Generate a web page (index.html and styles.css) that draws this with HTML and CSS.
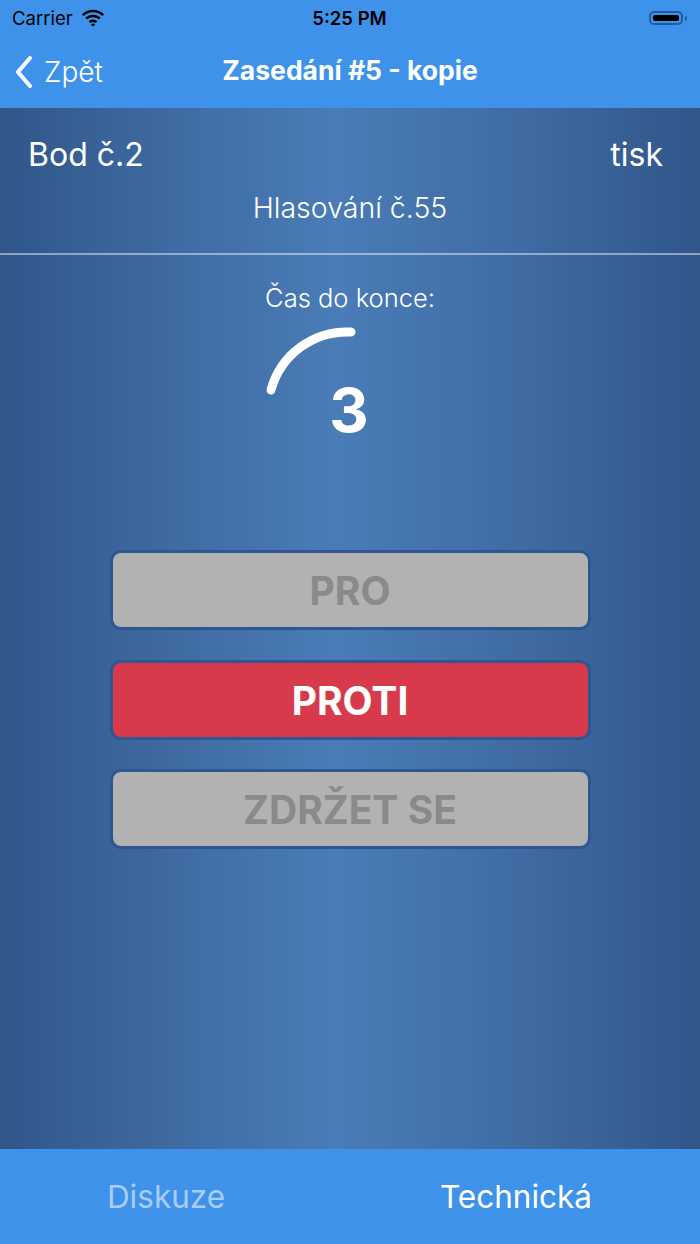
FILE: index.html
```html
<!DOCTYPE html>
<html lang="cs">
<head>
  <meta charset="UTF-8" />
  <meta name="viewport" content="width=device-width, initial-scale=1.0"/>
  <title>Hlasování</title>
  <link rel="stylesheet" href="styles.css">
</head>
<body>
  <div class="app">
    <!-- Stavový řádek -->
    <div class="status-bar">
      <div class="carrier">
        Carrier
        <svg class="wifi" width="24" height="18" viewBox="0 0 24 18">
          <path d="M12 3.2c3.6 0 6.9 1.4 9.4 3.7l1.6-1.7C20 2.4 16.2.8 12 .8S4 2.4 1 5.2l1.6 1.7C5.1 4.6 8.4 3.2 12 3.2z" fill="#000"/>
          <path d="M12 8.2c2.3 0 4.3.9 5.9 2.3l1.7-1.7C17.6 6.9 15 5.8 12 5.8s-5.6 1.1-7.6 3l1.7 1.7C7.7 9.1 9.7 8.2 12 8.2z" fill="#000"/>
          <path d="M12 13.1c1 0 1.9.4 2.5 1l1.8-1.7c-1.1-1.1-2.6-1.8-4.3-1.8s-3.2.7-4.3 1.8l1.8 1.7c.6-.6 1.5-1 2.5-1z" fill="#000"/>
          <path d="M12 17.6l2.2-2.1c-.6-.5-1.4-.9-2.2-.9s-1.6.4-2.2.9z" fill="#000"/>
        </svg>
      </div>
      <div class="clock">5:25 PM</div>
      <div class="battery">
        <span class="battery-body"><span class="battery-level"></span></span>
        <span class="battery-tip"></span>
      </div>
    </div>

    <!-- Navigace -->
    <div class="nav-bar">
      <a class="back" href="#">
        <svg width="20" height="34" viewBox="0 0 20 34">
          <path d="M16 3L4 17l12 14" fill="none" stroke="#fff" stroke-width="4" stroke-linecap="round" stroke-linejoin="round"/>
        </svg>
        Zpět
      </a>
      <div class="nav-title">Zasedání #5 - kopie</div>
    </div>

    <!-- Hlasování -->
    <div class="content">
      <div class="vote-head">
        <div class="point-row">
          <span>Bod č.2</span>
          <span>tisk</span>
        </div>
        <div class="vote-number">Hlasování č.55</div>
      </div>

      <div class="countdown">
        <div class="countdown-label">Čas do konce:</div>
        <svg class="timer" width="200" height="130" viewBox="0 0 200 130">
          <path d="M102 12 A79 79 0 0 0 22 70" fill="none" stroke="#fff" stroke-width="9" stroke-linecap="round"/>
          <text x="100" y="112" text-anchor="middle" class="timer-value">3</text>
        </svg>
      </div>

      <div class="choices">
        <button class="choice">PRO</button>
        <button class="choice active">PROTI</button>
        <button class="choice">ZDRŽET SE</button>
      </div>
    </div>

    <!-- Záložky -->
    <div class="tab-bar">
      <div class="tab">Diskuze</div>
      <div class="tab selected">Technická</div>
    </div>
  </div>
</body>
</html>
```

FILE: styles.css
```css
body {
  margin: 0;
  font-family: Inter, "Noto Sans", sans-serif;
  background: #3f92e9;
}

.app {
  width: 700px;
  height: 1244px;
  display: flex;
  flex-direction: column;
  overflow: hidden;
}

.status-bar {
  height: 36px;
  padding: 0 12px;
  display: flex;
  align-items: center;
  justify-content: space-between;
  background: #3f92e9;
  color: #000;
  font-size: 18.5px;
}

.carrier {
  width: 140px;
  display: flex;
  align-items: center;
  gap: 8px;
}

.clock {
  font-weight: 600;
}

.battery {
  width: 140px;
  display: flex;
  align-items: center;
  justify-content: flex-end;
  gap: 2px;
  padding-right: 1px;
}

.battery-body {
  width: 34px;
  height: 14px;
  border: 2px solid #1e5da5;
  border-radius: 5px;
  padding: 2px;
  box-sizing: border-box;
  display: flex;
}

.battery-level {
  flex: 1;
  background: #000;
  border-radius: 2px;
}

.battery-tip {
  width: 2px;
  height: 5px;
  background: #1e5da5;
  border-radius: 0 2px 2px 0;
}

.nav-bar {
  height: 72px;
  position: relative;
  display: flex;
  align-items: center;
  background: #3f92e9;
  color: #fff;
}

.back {
  display: flex;
  align-items: center;
  gap: 10px;
  padding-left: 14px;
  color: #fff;
  text-decoration: none;
  font-size: 28px;
  font-weight: 300;
}

.nav-title {
  position: absolute;
  left: 0;
  right: 0;
  top: 16px;
  text-align: center;
  font-size: 26.5px;
  font-weight: 700;
  line-height: 36px;
  pointer-events: none;
}

.content {
  flex: 1;
  color: #fff;
  background: linear-gradient(90deg, #30568a 0%, #3f6ba2 25%, #4a7cb7 48%, #3f6ba2 75%, #30568a 100%);
}

.vote-head {
  padding: 29px 0 29px;
  border-bottom: 2px solid rgba(255, 255, 255, 0.45);
}

.point-row {
  display: flex;
  justify-content: space-between;
  padding: 0 37px 0 28px;
  font-size: 32px;
  line-height: 36px;
}

.vote-number {
  margin-top: 19px;
  text-align: center;
  font-size: 28.5px;
  font-weight: 300;
  line-height: 32px;
}

.countdown {
  display: flex;
  flex-direction: column;
  align-items: center;
  padding-top: 27px;
}

.countdown-label {
  font-size: 25.5px;
  font-weight: 300;
  line-height: 32px;
}

.timer {
  margin-top: 6px;
  margin-right: 2px;
  margin-bottom: -13px;
}

.timer-value {
  fill: #fff;
  font-family: Inter, sans-serif;
  font-size: 61px;
  font-weight: 700;
}

.choices {
  display: flex;
  flex-direction: column;
  align-items: center;
  gap: 29.5px;
  margin-top: 113px;
}

.choice {
  width: 481px;
  height: 80px;
  padding-top: 2px;
  border: 3px solid #2e5690;
  border-radius: 11px;
  background: #b2b2b2;
  color: #8a8a8a;
  font-family: Inter, sans-serif;
  font-size: 39px;
  font-weight: 700;
  cursor: pointer;
}

.choice.active {
  background: #d73a4a;
  color: #fff;
}

.tab-bar {
  height: 95px;
  display: flex;
  align-items: center;
  background: #3f92e9;
  font-size: 31.5px;
}

.tab {
  flex: 1;
  padding-right: 18px;
  text-align: center;
  color: #a8cdf6;
}

.tab.selected {
  color: #fff;
}
```
